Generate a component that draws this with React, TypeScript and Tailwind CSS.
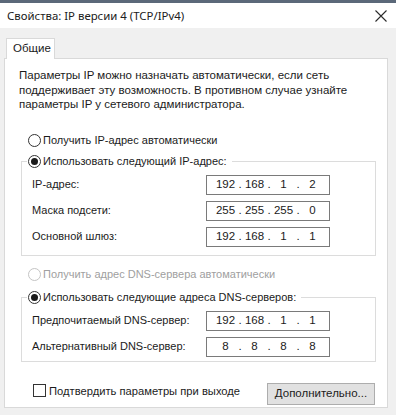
import React from 'react';

const font = { fontFamily: '"Liberation Sans", Arial, sans-serif' };

const Radio = ({ checked = false, disabled = false }: { checked?: boolean; disabled?: boolean }) => (
  <span
    className={`w-[13px] h-[13px] rounded-full border bg-white flex items-center justify-center shrink-0 ${
      disabled ? 'border-[#c4c4c4]' : 'border-[#333333]'
    }`}
  >
    {checked && <span className="w-[7px] h-[7px] rounded-full bg-[#1a1a1a]" />}
  </span>
);

const IpBox = ({ parts }: { parts: string[] }) => (
  <div className="w-[124px] h-[20px] border border-[#7a7a7a] bg-white flex items-center pl-[6px] text-[11.5px]">
    {parts.map((p, i) => (
      <React.Fragment key={i}>
        <span className="w-[25px] text-center">{p}</span>
        {i < 3 && <span className="w-[4px] text-center">.</span>}
      </React.Fragment>
    ))}
  </div>
);

const Row = ({ label, parts }: { label: string; parts: string[] }) => (
  <div className="flex items-center h-[20px]">
    <span className="w-[174px]">{label}</span>
    <IpBox parts={parts} />
  </div>
);

export default function App() {
  return (
    <div className="w-[396px] h-[415px] overflow-hidden flex flex-col bg-[#f0f0f0] text-[11px] text-[#1b1b1b]" style={font}>
      <div className="h-[3px] bg-[#5b6879]" />

      {/* Title bar */}
      <div className="h-[25px] bg-white flex items-center justify-between pl-[7px] pr-[9px]">
        <span className="text-[11.4px] text-[#202020]" style={{ fontFamily: '"Noto Sans", "Open Sans", sans-serif' }}>
          Свойства: IP версии 4 (TCP/IPv4)
        </span>
        <svg width="12" height="12" viewBox="0 0 12 12" className="mt-[1px]">
          <path d="M0.5 0.5 L11.5 11.5 M11.5 0.5 L0.5 11.5" stroke="#2b2b2b" strokeWidth="1.1" />
        </svg>
      </div>

      {/* Body */}
      <div className="flex-1 flex flex-col pt-[10px] pl-[4px] pr-[8px] pb-[7px]">
        <div className="flex">
          <div className="relative z-10 -mb-px ml-[2px] h-[21px] w-[49px] bg-white border border-b-0 border-[#d9d9d9] flex items-center pl-[6px] text-[11.5px]">
            Общие
          </div>
        </div>

        <div className="flex-1 bg-white border border-[#d9d9d9] flex flex-col">
          <p className="pl-[14px] pt-[9px] leading-[14.5px] text-[11.5px] whitespace-nowrap">
            Параметры IP можно назначать автоматически, если сеть
            <br />
            поддерживает эту возможность. В противном случае узнайте
            <br />
            параметры IP у сетевого администратора.
          </p>

          <label className="flex items-center gap-[2px] ml-[23px] mt-[22px] h-[14px]">
            <Radio />
            <span>Получить IP-адрес автоматически</span>
          </label>

          <fieldset className="ml-[16px] mr-[11px] mt-[7px] border border-[#dcdcdc] pb-[8px]">
            <legend className="ml-[5px] pl-[1px] pr-[5px] flex items-center gap-[2px] h-[14px]">
              <Radio checked />
              <span>Использовать следующий IP-адрес:</span>
            </legend>
            <div className="flex flex-col gap-[6px] pt-[6px] pl-[10px]">
              <Row label="IP-адрес:" parts={['192', '168', '1', '2']} />
              <Row label="Маска подсети:" parts={['255', '255', '255', '0']} />
              <Row label="Основной шлюз:" parts={['192', '168', '1', '1']} />
            </div>
          </fieldset>

          <label className="flex items-center gap-[2px] ml-[23px] mt-[12px] h-[14px] text-[#a0a0a0]">
            <Radio disabled />
            <span>Получить адрес DNS-сервера автоматически</span>
          </label>

          <fieldset className="ml-[16px] mr-[11px] mt-[9px] border border-[#dcdcdc] pb-[4px]">
            <legend className="ml-[5px] pl-[1px] pr-[5px] flex items-center gap-[2px] h-[14px]">
              <Radio checked />
              <span>Использовать следующие адреса DNS-серверов:</span>
            </legend>
            <div className="flex flex-col gap-[6px] pt-[6px] pl-[10px]">
              <Row label="Предпочитаемый DNS-сервер:" parts={['192', '168', '1', '1']} />
              <Row label="Альтернативный DNS-сервер:" parts={['8', '8', '8', '8']} />
            </div>
          </fieldset>

          <div className="flex items-center justify-between ml-[28px] mr-[12px] mt-[21px]">
            <label className="flex items-center gap-[3px] text-[11.2px] mb-[6px]">
              <span className="w-[13px] h-[13px] border border-[#333333] bg-white" />
              <span>Подтвердить параметры при выходе</span>
            </label>
            <button className="w-[108px] h-[22px] bg-[#e1e1e1] border border-[#adadad] text-[11.5px]">
              Дополнительно...
            </button>
          </div>
        </div>
      </div>
    </div>
  );
}
